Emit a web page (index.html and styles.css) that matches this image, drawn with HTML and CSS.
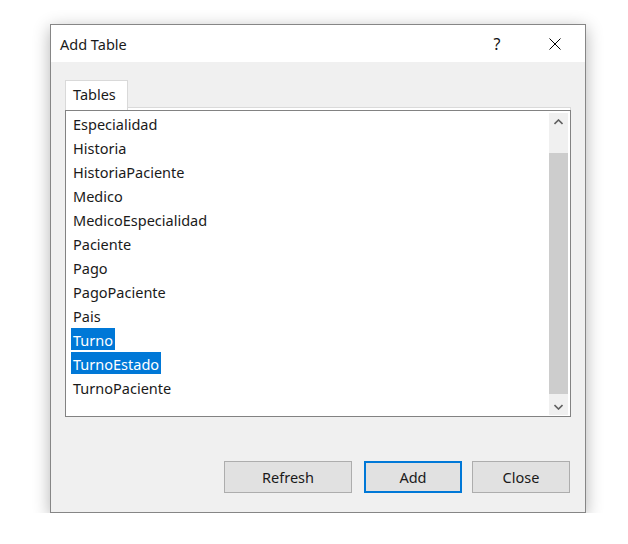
FILE: index.html
```html
<!DOCTYPE html>
<html>
<head>
<meta charset="utf-8">
<link rel="stylesheet" href="styles.css">
</head>
<body>
<div class="dialog">
  <div class="titlebar">
    <span class="title">Add Table</span>
    <span class="help">?</span>
    <svg class="close" width="12" height="12" viewBox="0 0 12 12"><path d="M0.5 0.5 L11.5 11.5 M11.5 0.5 L0.5 11.5" stroke="#000" stroke-width="1" fill="none"/></svg>
  </div>
  <div class="content">
    <div class="tabstrip">
      <div class="tab">Tables</div>
      <div class="tabfill"></div>
    </div>
    <div class="list">
      <div class="items">
        <div class="row"><span>Especialidad</span></div>
        <div class="row"><span>Historia</span></div>
        <div class="row"><span>HistoriaPaciente</span></div>
        <div class="row"><span>Medico</span></div>
        <div class="row"><span>MedicoEspecialidad</span></div>
        <div class="row"><span>Paciente</span></div>
        <div class="row"><span>Pago</span></div>
        <div class="row"><span>PagoPaciente</span></div>
        <div class="row"><span>Pais</span></div>
        <div class="row"><span class="sel">Turno</span></div>
        <div class="row"><span class="sel">TurnoEstado</span></div>
        <div class="row"><span>TurnoPaciente</span></div>
      </div>
      <div class="scrollbar">
        <div class="arrow"><svg width="9" height="6" viewBox="0 0 9 6"><path d="M0.5 5 L4.5 1 L8.5 5" stroke="#606060" stroke-width="1.6" fill="none"/></svg></div>
        <div class="track"><div class="thumb"></div></div>
        <div class="arrow"><svg width="9" height="6" viewBox="0 0 9 6"><path d="M0.5 1 L4.5 5 L8.5 1" stroke="#606060" stroke-width="1.6" fill="none"/></svg></div>
      </div>
    </div>
    <div class="buttons">
      <button class="btn btn-wide">Refresh</button>
      <button class="btn btn-default">Add</button>
      <button class="btn">Close</button>
    </div>
  </div>
</div>
</body>
</html>
```

FILE: styles.css
```css
html, body {
  margin: 0;
  padding: 0;
  background: #ffffff;
}
body {
  font-family: "Noto Sans", "Open Sans", sans-serif;
  font-size: 14.5px;
  color: #1a1a1a;
}
.dialog {
  margin: 24px 0 0 50px;
  width: 536px;
  height: 489px;
  box-sizing: border-box;
  border: 1px solid #868686;
  background: #f0f0f0;
  box-shadow: 0 4px 16px rgba(0, 0, 0, 0.3);
  display: flex;
  flex-direction: column;
}
.titlebar {
  height: 37px;
  background: #ffffff;
  display: flex;
  align-items: center;
  padding: 0 24px 0 9px;
}
.title {
  flex: 1;
  font-size: 14.5px;
}
.help {
  width: 16px;
  text-align: center;
  margin-right: 44px;
  font-size: 16px;
  color: #111;
}
.close {
  display: block;
}
.content {
  flex: 1;
  padding: 18px 14px 0 14px;
  display: flex;
  flex-direction: column;
}
.tabstrip {
  display: flex;
  height: 30px;
}
.tab {
  width: 63px;
  box-sizing: border-box;
  border: 1px solid #d9d9d9;
  border-bottom: none;
  background: #ffffff;
  padding: 2px 0 0 7px;
  line-height: 22px;
}
.tabfill {
  flex: 1;
  align-self: flex-end;
  height: 3px;
  box-sizing: border-box;
  border-top: 1px solid #dadada;
  border-right: 1px solid #dadada;
  background: #ffffff;
}
.list {
  height: 307px;
  box-sizing: border-box;
  border: 1px solid #828282;
  background: #ffffff;
  display: flex;
}
.items {
  flex: 1;
  padding: 1px 0 0 5px;
}
.row {
  height: 24px;
}
.row span {
  display: inline-block;
  height: 22px;
  line-height: 25px;
  padding: 0 2px;
}
.row span.sel {
  background: #0078d7;
  color: #ffffff;
}
.scrollbar {
  width: 19px;
  margin: 2px 2px 1px 0;
  background: #f0f0f0;
  display: flex;
  flex-direction: column;
}
.arrow {
  height: 17px;
  display: flex;
  align-items: center;
  justify-content: center;
}
.arrow svg {
  display: block;
}
.track {
  flex: 1;
  padding: 23px 0 4px;
  display: flex;
  flex-direction: column;
}
.thumb {
  flex: 1;
  background: #cdcdcd;
}
.buttons {
  margin-top: 44px;
  padding-right: 1px;
  display: flex;
  justify-content: flex-end;
  gap: 10px;
}
.btn {
  width: 98px;
  height: 32px;
  box-sizing: border-box;
  border: 1px solid #adadad;
  background: #e1e1e1;
  font-family: "Noto Sans", "Open Sans", sans-serif;
  font-size: 14.5px;
  color: #1a1a1a;
  padding: 0;
}
.btn-wide {
  width: 128px;
  margin-right: 2px;
}
.btn-default {
  border: 2px solid #0078d7;
}
```
